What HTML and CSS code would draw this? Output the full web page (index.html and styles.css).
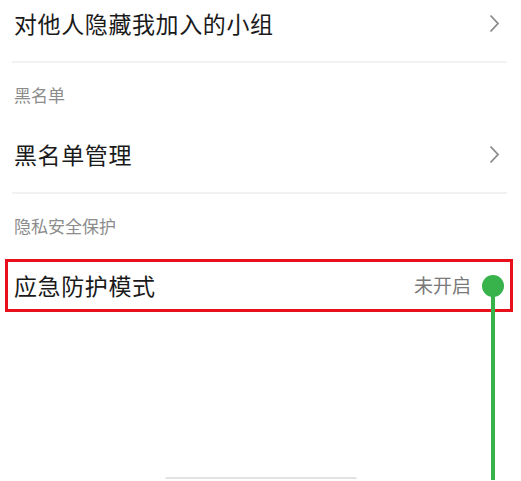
FILE: index.html
```html
<!DOCTYPE html>
<html lang="zh-CN">
<head>
    <meta charset="UTF-8">
    <meta name="viewport" content="width=device-width, initial-scale=1.0">
    <title>隐私设置</title>
    <link rel="stylesheet" href="styles.css">
</head>
<body>

    <div class="settings">
        <div class="row">
            <span class="row-title">对他人隐藏我加入的小组</span>
            <svg class="chevron" width="11" height="19" viewBox="0 0 11 19">
                <polyline points="1.5,1.5 9,9.5 1.5,17.5" fill="none" stroke="#8a8a8a" stroke-width="1.8"/>
            </svg>
        </div>

        <div class="section-label">黑名单</div>
        <div class="row">
            <span class="row-title">黑名单管理</span>
            <svg class="chevron" width="11" height="19" viewBox="0 0 11 19">
                <polyline points="1.5,1.5 9,9.5 1.5,17.5" fill="none" stroke="#8a8a8a" stroke-width="1.8"/>
            </svg>
        </div>

        <div class="section-label">隐私安全保护</div>
        <div class="row row-last">
            <span class="row-title">应急防护模式</span>
            <span class="status">未开启</span>

            <!-- annotation overlay -->
            <div class="highlight"></div>
            <div class="pointer-dot"></div>
            <div class="pointer-line"></div>
        </div>
    </div>

    <div class="sheet-edge"></div>

</body>
</html>
```

FILE: styles.css
```css
html, body {
    height: 100%;
}

body {
    margin: 0;
    overflow: hidden;
    background: #ffffff;
    font-family: "Noto Sans CJK SC", "Noto Sans", sans-serif;
    color: #1a1a1a;
}

.settings {
    margin-top: -15px;
    padding: 0 14px 0 12px;
}

.row {
    position: relative;
    display: flex;
    align-items: center;
    justify-content: space-between;
    height: 76px;
    padding: 0 7px 0 2px;
    border-bottom: 2px solid #f2f2f2;
}

.row-last {
    border-bottom: none;
}

.row-title {
    font-size: 23px;
    line-height: 30px;
    letter-spacing: 0.6px;
}

.chevron {
    display: block;
}

.section-label {
    padding: 21px 0 10px 2px;
    font-size: 17px;
    line-height: 22px;
    color: #8c8c8c;
}

.status {
    margin-right: 29px;
    font-size: 19px;
    line-height: 26px;
    color: #7a7a7a;
}

/* Red box drawn over the row */
.highlight {
    position: absolute;
    top: 12px;
    bottom: 11px;
    left: -7px;
    right: -6px;
    border: 3.5px solid #e8111b;
}

.pointer-dot {
    position: absolute;
    top: 28px;
    right: 3px;
    width: 22px;
    height: 22px;
    border-radius: 50%;
    background: #38b24a;
}

.pointer-line {
    position: absolute;
    top: 39px;
    right: 12px;
    width: 4px;
    height: 194px;
    background: #38b24a;
}

.sheet-edge {
    width: 192px;
    height: 0;
    margin: 154px auto 0;
    border-top: 2px solid #e2e2e2;
    border-radius: 8px 8px 0 0;
}
```
